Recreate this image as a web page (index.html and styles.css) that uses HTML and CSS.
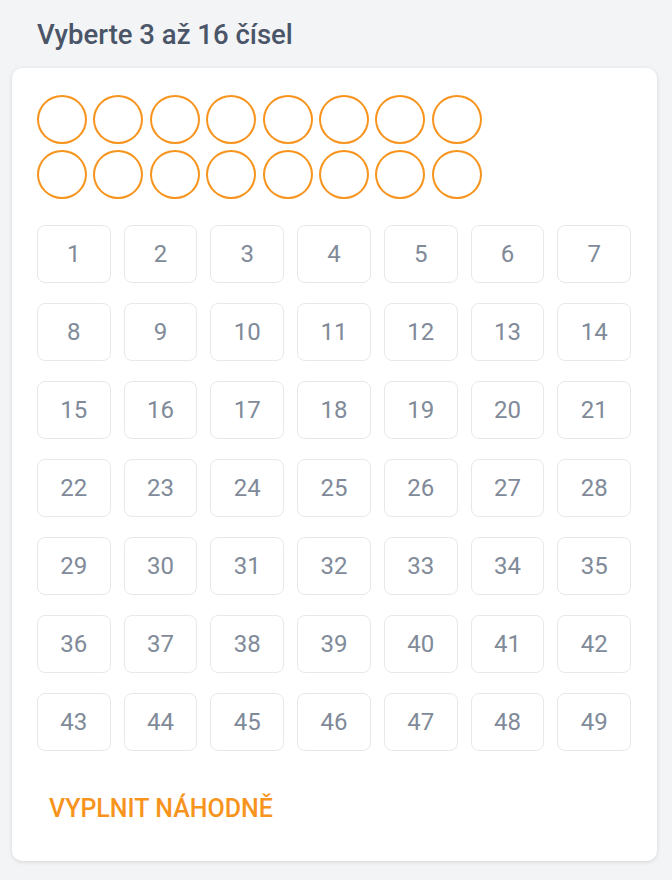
FILE: index.html
```html
<!DOCTYPE html>
<html lang="cs">

<head>
    <meta charset="UTF-8">
    <meta name="viewport" content="width=device-width, initial-scale=1.0">
    <link rel="stylesheet" href="styles.css">
    <title>Vyberte čísla</title>
</head>

<body>
    <h2 class="title">Vyberte 3 až 16 čísel</h2>
    <div class="card">
        <div class="picked">
            <div class="slot"></div><div class="slot"></div><div class="slot"></div><div class="slot"></div>
            <div class="slot"></div><div class="slot"></div><div class="slot"></div><div class="slot"></div>
            <div class="slot"></div><div class="slot"></div><div class="slot"></div><div class="slot"></div>
            <div class="slot"></div><div class="slot"></div><div class="slot"></div><div class="slot"></div>
        </div>
        <div id="numbers" class="numbers"></div>
        <button class="random-btn">Vyplnit náhodně</button>
    </div>
    <script>
        (() => {
            const grid = document.getElementById("numbers");
            for (let i = 1; i <= 49; i++) {
                const btn = document.createElement("button");
                btn.className = "num";
                btn.innerText = i;
                grid.appendChild(btn);
            }
        })();
    </script>
</body>

</html>
```

FILE: styles.css
```css
body {
    margin: 0;
    padding: 0 15px 18px 12px;
    background-color: #f3f4f6;
    font-family: Roboto, "Liberation Sans", sans-serif;
}

.title {
    margin: 18px 0 17px;
    padding-left: 25px;
    font-size: 27.5px;
    line-height: 33px;
    font-weight: 500;
    color: #4a5568;
}

.card {
    background-color: white;
    border-radius: 10px;
    box-shadow: 0 1px 4px rgba(0, 0, 0, 0.13);
    padding: 27px 26px 37px 25px;
}

.picked {
    display: grid;
    grid-template-columns: repeat(8, 50px);
    column-gap: 6.4px;
    row-gap: 6px;
}

.slot {
    box-sizing: border-box;
    width: 50px;
    height: 49px;
    border: 2.5px solid #f7941d;
    border-radius: 50%;
}

.numbers {
    display: grid;
    grid-template-columns: repeat(7, 1fr);
    grid-auto-rows: 58px;
    column-gap: 13px;
    row-gap: 20px;
    margin-top: 26px;
}

.num {
    box-sizing: border-box;
    background: white;
    border: 1.5px solid #e6e9ec;
    border-radius: 8px;
    font-family: Roboto, "Liberation Sans", sans-serif;
    font-size: 24px;
    color: #808a99;
    padding: 0;
}

.random-btn {
    display: block;
    margin-top: 43px;
    margin-left: 12px;
    padding: 0;
    border: none;
    background: none;
    font-family: Roboto, "Liberation Sans", sans-serif;
    font-size: 25px;
    line-height: 30px;
    font-weight: 500;
    text-transform: uppercase;
    color: #f7941d;
}
```
